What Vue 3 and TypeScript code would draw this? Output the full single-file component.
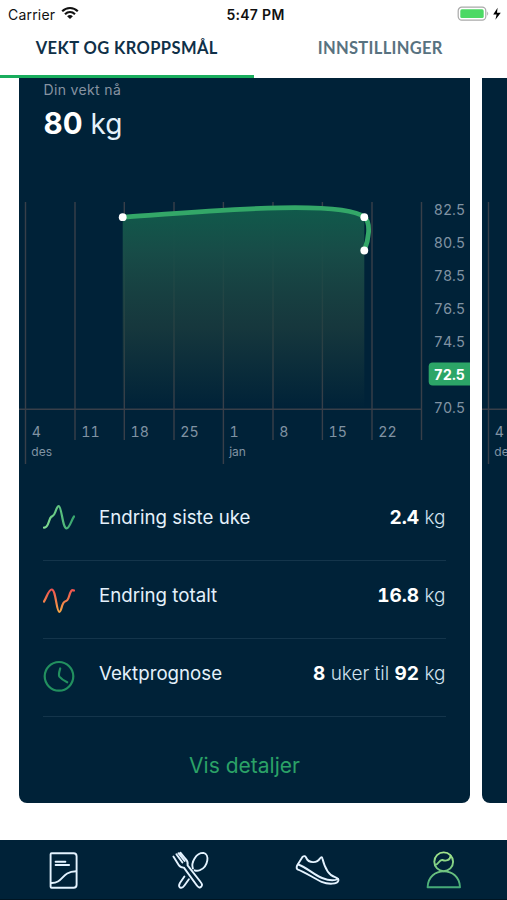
<script setup lang="ts">
interface Tick { x: number; day: string; month?: string }
interface Level { y: number; label: string; active?: boolean }

const ticks: Tick[] = [
  { x: 25.5, day: '4', month: 'des' },
  { x: 75, day: '11' },
  { x: 124.3, day: '18' },
  { x: 174, day: '25' },
  { x: 223.4, day: '1', month: 'jan' },
  { x: 273, day: '8' },
  { x: 322.4, day: '15' },
  { x: 372, day: '22' },
  { x: 421.5, day: '' },
]
const levels: Level[] = ['82.5', '80.5', '78.5', '76.5', '74.5', '72.5', '70.5'].map((label, i) => ({
  label,
  y: 214.6 + i * 33,
  active: label === '72.5',
}))
const points = [[122.7, 217.2], [364.3, 217.2], [364.3, 250.5]]
const curve = 'M122.7 217.2C203 211.5 342 199 364.3 217.2C371.5 223 368.5 240 364.3 250.5'
</script>

<template>
  <div class="screen">
    <header class="status">
      <div class="carrier">
        <span class="carrier-name">Carrier</span>
        <svg class="wifi" width="18" height="14" viewBox="0 0 18 14">
          <g fill="none" stroke="#111" stroke-width="2.2">
            <path d="M1.2 5.2C5.6.9 12.4.9 16.8 5.2" />
            <path d="M4 8.2C6.9 5.5 11.1 5.5 14 8.2" />
          </g>
          <path d="M6.1 10.2Q9 7.9 11.9 10.2L9 13.1Z" fill="#111" />
        </svg>
      </div>
      <div class="clock">5:47 PM</div>
      <div class="power">
        <svg width="46" height="16" viewBox="0 0 46 16">
          <rect x="1.2" y="1.2" width="27.6" height="13" rx="3.6" fill="#fff" stroke="#a9a9a9" stroke-width="1.2" />
          <rect x="3.3" y="3.3" width="23.4" height="8.8" rx="1.6" fill="#4cd964" />
          <path d="M30.2 5.6Q32.2 7.7 30.2 9.8Z" fill="#a9a9a9" />
          <path d="M40.6 1.8L36.2 8.6H39.6L38.4 13.8L43.8 6.7H40Z" fill="#000" />
        </svg>
      </div>
    </header>

    <nav class="tabs">
      <div class="tab active"><span>VEKT OG KROPPSMÅL</span></div>
      <div class="tab"><span>INNSTILLINGER</span></div>
    </nav>

    <main class="carousel">
      <section v-for="card in 2" :key="card" class="card">
        <div class="summary">
          <template v-if="card === 1">
            <div class="caption">Din vekt nå</div>
            <div class="weight"><b>80</b> kg</div>
          </template>
        </div>
        <svg class="chart" width="451" height="280" viewBox="19 190 451 280">
          <defs>
            <linearGradient id="area" x1="0" y1="208" x2="0" y2="408" gradientUnits="userSpaceOnUse">
              <stop offset="0" stop-color="#105a4b" />
              <stop offset=".22" stop-color="#184d48" stop-opacity=".97" />
              <stop offset=".6" stop-color="#20413f" stop-opacity=".68" />
              <stop offset="1" stop-color="#20413f" stop-opacity="0" />
            </linearGradient>
          </defs>
          <g class="grid">
            <line v-for="t in ticks" :key="t.x" :x1="t.x" :x2="t.x" y1="202" :y2="t.month ? 464 : 440" />
            <line x1="19" x2="421.5" y1="409.3" y2="409.3" />
          </g>
          <g v-if="card === 1">
            <path d="M122.7 217.2C203 211.5 342 199 364.3 217.2V408H122.7Z" fill="url(#area)" />
            <path :d="curve" class="curve" />
            <circle v-for="(p, i) in points" :key="i" :cx="p[0]" :cy="p[1]" r="3.9" fill="#fff" />
          </g>
          <g class="labels">
            <template v-for="t in ticks" :key="t.x">
              <text v-if="card === 1 || t.x < 60" :x="t.x + 6.2" y="437">{{ t.day }}</text>
              <text v-if="t.month && (card === 1 || t.x < 60)" class="month" :x="t.x + 5.8" y="455.5">{{ t.month }}</text>
            </template>
            <template v-if="card === 1">
              <template v-for="l in levels" :key="l.label">
                <rect v-if="l.active" x="428.7" y="362.5" width="50" height="23" rx="4" fill="#2ca567" />
                <text :class="{ current: l.active }" x="433.7" :y="l.y">{{ l.label }}</text>
              </template>
            </template>
          </g>
        </svg>

        <template v-if="card === 1">
          <div class="rows">
            <div class="row">
              <svg class="icon" width="32" height="50" viewBox="43 493 32 50">
                <defs>
                  <linearGradient id="up" x1="0" x2="1"><stop stop-color="#84df92" /><stop offset="1" stop-color="#38a66f" /></linearGradient>
                </defs>
                <path d="M44 527.6C48.8 528.2 48.6 518.5 51.3 516.8C53.5 515.5 54 516 55.3 512C56.5 508.5 57.3 506.2 58.7 506.2C61.8 506.2 62.4 528.4 66.6 528.4C69.5 528.4 71.5 520 74 516.5" stroke="url(#up)" />
              </svg>
              <span>Endring siste uke</span>
              <span class="value"><b>2.4</b> kg</span>
            </div>
            <div class="row">
              <svg class="icon" width="32" height="50" viewBox="43 571 32 50">
                <defs>
                  <linearGradient id="down" x1="0" y1="0" x2="0" y2="1"><stop stop-color="#ef5350" /><stop offset="1" stop-color="#f5a445" /></linearGradient>
                </defs>
                <path d="M44 601.5C46.5 598 48.5 589.5 51.7 589.5C56 589.5 56.3 611.8 59.3 611.8C61.8 611.8 61.5 602.5 65 601.5C67 601 67.8 600.5 69 596.5C70.5 591.5 71.5 589 74 590.5" stroke="url(#down)" />
              </svg>
              <span>Endring totalt</span>
              <span class="value"><b>16.8</b> kg</span>
            </div>
            <div class="row">
              <svg class="icon" width="32" height="50" viewBox="43 649 32 50">
                <g stroke="#22905f">
                  <circle cx="59" cy="676.3" r="14.3" />
                  <path d="M60.2 668.5C59 672.5 58.2 675 59.4 676.6C61 678.5 63.5 680.5 67.2 682.3" />
                </g>
              </svg>
              <span>Vektprognose</span>
              <span class="value"><b>8</b> uker til <b>92</b> kg</span>
            </div>
          </div>
          <div class="details"><span>Vis detaljer</span></div>
        </template>
      </section>
    </main>

    <footer class="tabbar">
      <div class="item">
        <svg width="50" height="50" viewBox="38.4 845 50 50">
          <path d="M52 853.3H74Q77 853.3 77 856.3V884.7Q77 887.7 74 887.7H52Q51 887.7 51 886.7V854.3Q51 853.3 52 853.3Z" />
          <path d="M51.5 883C64 883.5 61 871.7 76.5 871.2M56 861.7H65.8M56 865H69.5" />
        </svg>
      </div>
      <div class="item">
        <svg width="50" height="50" viewBox="165.1 845 50 50">
          <path d="M173.5 856.5L178.8 865Q180.5 867.8 184 867.6L196.8 885.2Q199.3 888.6 201.2 886.8Q203.3 885 200.7 882L187.7 865.3Q188.3 861.5 186 859.3L180.5 852.7M176.5 854.3L182.5 862.5M178.5 853.2L184.7 861" />
          <path d="M193 868.5C190.8 862.5 196.2 852.8 203.5 852.9C210 854 208.5 866.8 200 870.2Q197 871.3 194.8 870.3M184.5 876.5L180 883Q178.2 886.3 180.3 887.6Q182.4 888.5 184.5 885.5L189 879.2" />
        </svg>
      </div>
      <div class="item">
        <svg width="50" height="50" viewBox="291.9 845 50 50">
          <path d="M302.5 856.8Q305 855 306.2 858C308.5 863.2 317 863.5 319.8 858.5Q321.8 855.8 322.3 858.5C324.8 868.5 328 875.2 335 877.2Q338.8 878.8 338.3 880.5C337.5 884.5 328 884.5 321.5 881.8C314 878.5 306 872.5 297.3 869.3Q296 868.3 297 865.5Z" />
          <path d="M298 864.5C307 867.5 313 874.5 322 878C327 880 334 881 338 879" />
        </svg>
      </div>
      <div class="item">
        <svg width="50" height="50" viewBox="418.6 845 50 50">
          <defs>
            <linearGradient id="me" x1="0" x2="0" y1="852" y2="888" gradientUnits="userSpaceOnUse"><stop stop-color="#a4e58b" /><stop offset="1" stop-color="#43a977" /></linearGradient>
          </defs>
          <g stroke="url(#me)">
            <circle cx="443.3" cy="861.8" r="9.4" />
            <path d="M434.5 865C438.5 864.8 438.5 859.3 442 860C445.5 861.3 449.5 860.7 450.2 855.8M427.2 887.3H459.6C459.2 876.5 451.5 871.4 443.4 871.4C435.3 871.4 427.6 876.5 427.2 887.3Z" />
          </g>
        </svg>
      </div>
    </footer>
  </div>
</template>

<style>
body { margin: 0; background: #fff; }
</style>

<style scoped>
.screen { width: 507px; height: 900px; display: flex; flex-direction: column; overflow: hidden; background: #fff; font-family: Inter, "Liberation Sans", sans-serif; }
.status { height: 28px; display: grid; grid-template-columns: 1fr 1fr 1fr; align-items: center; color: #111; font-size: 14px; box-sizing: border-box; padding: 0 4px 0 8px; flex: none; }
.carrier { display: flex; align-items: center; gap: 6px; letter-spacing: .2px; }
.wifi { margin-top: -2px; }
.clock { text-align: center; font-weight: 600; letter-spacing: .3px; }
.power { display: flex; justify-content: flex-end; }
.tabs { height: 50px; display: flex; flex: none; }
.tab { flex: 1; text-align: center; font: 700 16.5px/40px Lato, sans-serif; color: #587280; box-sizing: border-box; letter-spacing: .3px; }
.tab.active { color: #0f3048; border-bottom: 3px solid #19ad5d; letter-spacing: .4px; }
.carousel { display: flex; gap: 12px; padding-left: 19px; height: 725px; flex: none; }
.card { width: 451px; flex: none; background: #002238; border-radius: 0 0 8px 8px; overflow: hidden; }
.summary { height: 112px; padding: 1px 0 0 24.5px; box-sizing: border-box; }
.caption { font-size: 14px; line-height: 22px; color: #8793a1; letter-spacing: .35px; }
.weight { font-size: 28px; line-height: 44px; color: #e4f1fb; }
.weight b { font-size: 29.5px; }
.weight b, .value b { font-weight: 700; color: #fff; }
.value b { font-variant-numeric: tabular-nums; }
.chart { display: block; }
.grid line { stroke: #383f49; stroke-width: 1.4; }
.curve { fill: none; stroke: #33a768; stroke-width: 4.8; }
.labels { font-size: 14.2px; fill: #8093a3; font-variant-numeric: tabular-nums; }
.labels .month { font-size: 12px; }
.labels .current { font-weight: 700; fill: #fff; }
.rows { padding: 13px 24.5px 0 24px; }
.row { height: 78px; display: flex; align-items: flex-start; gap: 24px; border-bottom: 1.5px solid #14354b; box-sizing: border-box; color: #e4f1fb; font-size: 18.7px; line-height: 50px; padding-top: 10px; }
.icon { fill: none; stroke-width: 2.2; stroke-linecap: round; flex: none; }
.row .value { margin-left: auto; color: #cfe0ed; font-weight: 300; font-size: 19px; }
.details { text-align: center; color: #2ba267; font-size: 21px; line-height: 97px; }
.tabbar { margin-top: 37px; height: 60px; display: flex; background: #002238; box-sizing: border-box; border-bottom: 1px solid #001522; flex: none; }
.item { flex: 1; display: flex; justify-content: center; padding-top: 5px; }
.item svg { fill: none; stroke: #e4f3ff; stroke-width: 1.9; stroke-linecap: round; stroke-linejoin: round; }
</style>
